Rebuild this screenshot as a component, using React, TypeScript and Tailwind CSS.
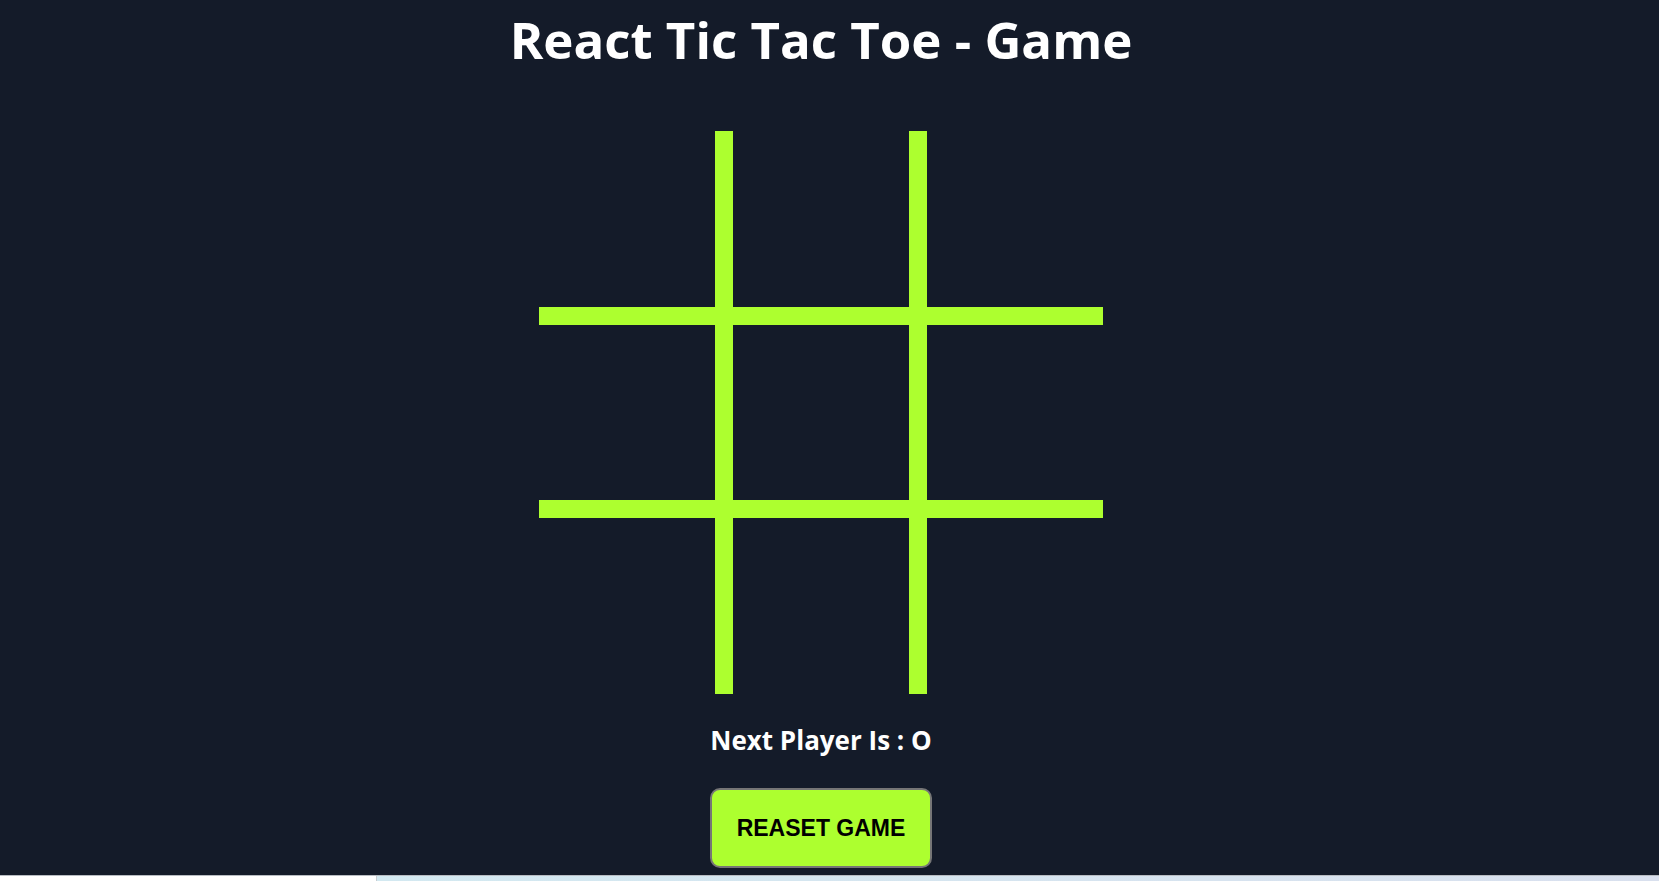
import React, { useState } from "react"

const cells = Array.from({ length: 9 }, (_, i) => i)

export default function App() {
  const [squares, setSquares] = useState<(string | null)[]>(Array(9).fill(null))
  const [xNext, setXNext] = useState(false)

  const play = (i: number) => {
    if (squares[i]) return
    const next = squares.slice()
    next[i] = xNext ? "X" : "O"
    setSquares(next)
    setXNext(!xNext)
  }

  const reset = () => {
    setSquares(Array(9).fill(null))
    setXNext(false)
  }

  return (
    <div className="min-h-screen bg-white">
      {/* content is centred as if a 17px scrollbar took the right edge */}
      <div className="flex h-[875px] flex-col items-center bg-[#141b29] pr-[17px] font-['Open_Sans',sans-serif] text-white">
        <h1 className="mt-[4px] text-[51px] font-bold leading-[70px]">React Tic Tac Toe - Game</h1>

        <div className="mt-[57px] grid grid-cols-[176px_176px_176px] grid-rows-[176px_175px_176px] gap-[18px] bg-[#adff2f]">
          {cells.map((i) => (
            <button
              key={i}
              onClick={() => play(i)}
              className="flex items-center justify-center bg-[#141b29] text-[96px] font-bold text-[#adff2f]"
            >
              {squares[i]}
            </button>
          ))}
        </div>

        <p className="mt-[26px] text-[26px] font-bold leading-[40px]">Next Player Is : {xNext ? "X" : "O"}</p>

        <button
          onClick={reset}
          className="mt-[28px] h-[80px] w-[222px] rounded-[10px] border-2 border-[#767676] bg-[#adff2f] font-['Liberation_Sans',Arial,sans-serif] text-[23px] font-bold text-black"
        >
          REASET GAME
        </button>
      </div>
      <div className="flex h-[6px] border-t border-[#b8bcc2]">
        <div className="w-[376px] bg-white" />
        <div className="flex-1 border-l border-[#c8cdd2] bg-gradient-to-r from-[#d3e9f1] to-[#d9e0ee]" />
      </div>
    </div>
  )
}
